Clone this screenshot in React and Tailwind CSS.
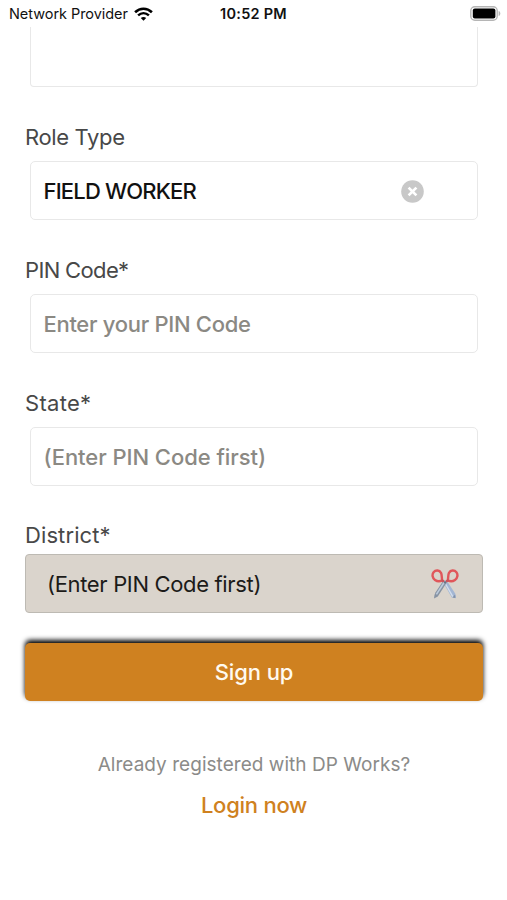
import React, { useState } from "react";

// the fields that are drawn with a white box under their label
const fields = [
  {
    name: "role",
    label: "Role Type",
    labelClass: "tracking-[-0.35px]",
    text: "FIELD WORKER",
    textClass: "text-[#111111] font-medium tracking-[-0.8px]",
    clearable: true,
  },
  {
    name: "pin",
    label: "PIN Code*",
    labelClass: "tracking-[-0.65px]",
    text: "Enter your PIN Code",
    textClass: "text-[#8b8983] font-medium tracking-[-0.3px]",
  },
  {
    name: "state",
    label: "State*",
    labelClass: "tracking-[0.3px]",
    text: "(Enter PIN Code first)",
    textClass: "text-[#8b8983] font-medium tracking-[-0.05px]",
  },
];

const WifiIcon = () => (
  <svg className="ml-1.5 h-[14px] w-[19px]" viewBox="0 0 19 14" fill="none">
    <path d="M1.1 5.2C6 0.5 13 0.5 17.9 5.2" stroke="#000" strokeWidth="2.6" />
    <path d="M4.1 8.4C7.3 5.4 11.7 5.4 14.9 8.4" stroke="#000" strokeWidth="2.4" />
    <path d="M9.5 13.8L6.8 11.1C8.3 9.7 10.7 9.7 12.2 11.1Z" fill="#000" />
  </svg>
);

const BatteryIcon = () => (
  <svg className="h-[15px] w-[31px]" viewBox="0 0 31 15">
    <rect x="0.8" y="0.8" width="26.4" height="13.4" rx="4" fill="#fff" stroke="#b5b5b5" strokeWidth="1.4" />
    <rect x="2.8" y="2.6" width="22.6" height="9.8" rx="2" fill="#000" />
    <path d="M28.6 5C30.9 5.6 30.9 9.4 28.6 10Z" fill="#b5b5b5" />
  </svg>
);

const ClearIcon = () => (
  <svg className="h-[23px] w-[23px]" viewBox="0 0 23 23">
    <circle cx="11.5" cy="11.5" r="11.3" fill="#c8c8c8" />
    <path d="M7.6 7.6L15.4 15.4M15.4 7.6L7.6 15.4" stroke="#fff" strokeWidth="2.7" />
  </svg>
);

const ScissorsIcon = () => (
  <svg className="h-[30px] w-[28px]" viewBox="0 0 28 30" fill="none">
    <path d="M11.6 12.6L15.6 11.4L24.2 24.4Q25.4 27 24.8 29.2L20.8 28.4Z" fill="#a3b6d3" />
    <path d="M13.6 13.4L21.8 27.6" stroke="#d3deec" strokeWidth="1.3" />
    <path d="M24 25.6L24.4 29L21.6 28.4Z" fill="#8290a6" />
    <path d="M16.4 12.6L12.4 11.4L4.6 23.2Q3 26 3 29.4L6.8 27.6Z" fill="#8793a3" />
    <path d="M13.4 13L5.4 25.4" stroke="#bccbdc" strokeWidth="1.6" />
    <path
      d="M11.2 11.4C9 12.6 6 12.4 4 11C1.4 9.2 0.8 5.4 2.6 3.2C4.6 0.8 8.4 1 10 3.8C11 5.8 10.6 8.6 11.2 11.4Z"
      stroke="#e0565a"
      strokeWidth="2.4"
    />
    <path
      d="M16.8 11.4C19 12.6 22 12.4 24 11C26.6 9.2 27.2 5.4 25.4 3.2C23.4 0.8 19.6 1 18 3.8C17 5.8 17.4 8.6 16.8 11.4Z"
      stroke="#e0565a"
      strokeWidth="2.4"
    />
    <path d="M10.6 11L13 12.6M17.4 11L15 12.6" stroke="#c9525a" strokeWidth="2.2" />
    <circle cx="14" cy="13.4" r="1" fill="#65717f" />
  </svg>
);

const App = () => {
  // to show the role until the user clears it
  const [roleVisible, setRoleVisible] = useState(true);

  return (
    <div className="h-[900px] w-full overflow-hidden bg-white font-['Inter',sans-serif]">
      <header className="grid h-[27px] grid-cols-[1fr_auto_1fr] items-center pl-[9px] pr-[6px] text-[14.5px] leading-none text-[#111111]">
        <div className="flex items-center">
          <span className="whitespace-nowrap pt-px tracking-[-0.05px]">Network Provider</span>
          <WifiIcon />
        </div>
        <span className="whitespace-nowrap pt-px pr-[3px] font-semibold tracking-[0.25px]">10:52 PM</span>
        <div className="flex justify-end">
          <BatteryIcon />
        </div>
      </header>

      <main className="pl-[25px] pr-[24px]">
        {/* the end of the field that is scrolled under the status bar */}
        <div className="mx-[5px] h-[60px] rounded-b-[4px] border-x-[1.5px] border-b-[1.5px] border-[#e8e8e8]" />

        {fields.map((field) => (
          <div key={field.name} className="h-[132.8px] pt-[34px]">
            <label className={`block h-[40px] text-[22px] leading-[32px] text-[#484848] ${field.labelClass}`}>
              {field.label}
            </label>
            <div className="mx-[5px] flex h-[59px] items-center justify-between rounded-[5px] border-[1.5px] border-[#e8e8e8] pl-[12.5px] pr-[53px] pt-[2px] text-[22px]">
              <span className={`whitespace-nowrap ${field.textClass}`}>
                {(!field.clearable || roleVisible) && field.text}
              </span>
              {field.clearable && (
                <button title="Clear role" onClick={() => setRoleVisible(false)}>
                  <ClearIcon />
                </button>
              )}
            </div>
          </div>
        ))}

        <div className="pt-[34px]">
          <label className="block h-[35px] text-[22px] leading-[32px] tracking-[0.1px] text-[#484848]">
            District*
          </label>
          <div className="flex h-[59px] items-center justify-between rounded-[4px] border border-[#bdbab3] bg-[#dad4cc] pl-[21px] pr-[23px] text-[22px] text-[#1c1b19]">
            <span className="whitespace-nowrap pt-[2px] tracking-[-0.34px]">(Enter PIN Code first)</span>
            <ScissorsIcon />
          </div>
        </div>

        <button className="mt-[30px] block h-[58px] w-full rounded-[5px] bg-[#cf8120] text-[22px] font-medium tracking-[-0.1px] text-[#fffaf0] shadow-[0_-3px_5px_rgba(0,0,0,1)]">
          Sign up
        </button>

        <div className="pt-[50px] text-center">
          <p className="h-[39px] whitespace-nowrap text-[19px] leading-[28px] tracking-[0.04px] text-[#8b8b89]">
            Already registered with DP Works?
          </p>
          <button className="text-[22px] font-medium leading-[30px] tracking-[-0.25px] text-[#cf8120]">
            Login now
          </button>
        </div>
      </main>
    </div>
  );
};

export default App;
